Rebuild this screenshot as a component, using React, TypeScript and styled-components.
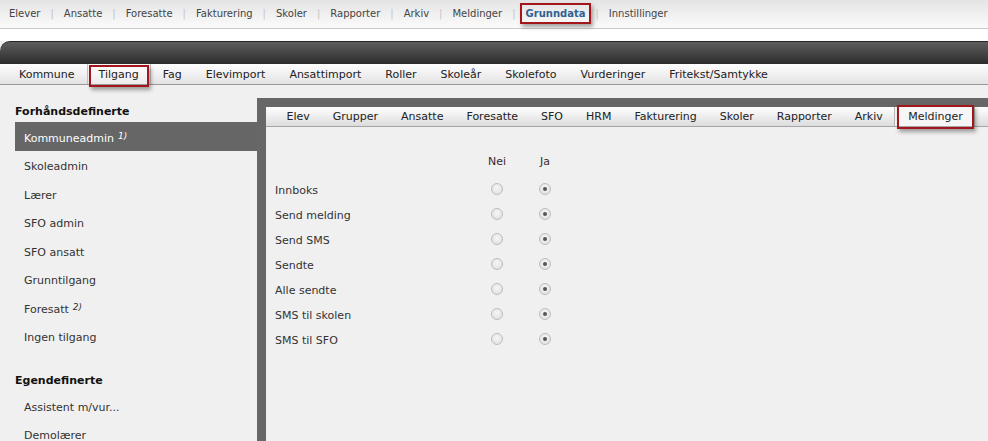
import styled, { createGlobalStyle } from 'styled-components';

const GlobalStyle = createGlobalStyle`
    html, body {
        margin: 0;
        padding: 0;
        background: #f0f0f0;
        overflow: hidden;
    }
    body {
        font-family: "DejaVu Sans", Verdana, sans-serif;
        font-size: 11px;
        color: #333;
    }
`;

const topItems = ['Elever', 'Ansatte', 'Foresatte', 'Fakturering', 'Skoler', 'Rapporter', 'Arkiv', 'Meldinger', 'Grunndata', 'Innstillinger'];
const subItems = ['Kommune', 'Tilgang', 'Fag', 'Elevimport', 'Ansattimport', 'Roller', 'Skoleår', 'Skolefoto', 'Vurderinger', 'Fritekst/Samtykke'];
const tabs = ['Elev', 'Grupper', 'Ansatte', 'Foresatte', 'SFO', 'HRM', 'Fakturering', 'Skoler', 'Rapporter', 'Arkiv', 'Meldinger'];
const predefined = [
    { name: 'Kommuneadmin', note: '1)' },
    { name: 'Skoleadmin' },
    { name: 'Lærer' },
    { name: 'SFO admin' },
    { name: 'SFO ansatt' },
    { name: 'Grunntilgang' },
    { name: 'Foresatt', note: '2)' },
    { name: 'Ingen tilgang' },
];
const custom = ['Assistent m/vur...', 'Demolærer'];
const rights = ['Innboks', 'Send melding', 'Send SMS', 'Sendte', 'Alle sendte', 'SMS til skolen', 'SMS til SFO'];

const Page = styled.div`
    display: flex;
    flex-direction: column;
    height: 441px;
`;

const TopNav = styled.nav`
    display: flex;
    align-items: center;
    height: 28px;
    padding-left: 9px;
    background: linear-gradient(#e4e4e4, #fbfbfb);
    border-bottom: 1px solid #c9c9c9;
    font-size: 10px;
    color: #444;
`;

const TopLink = styled.span<{ active?: boolean }>`
    position: relative;
    line-height: 14px;
    ${props => props.active && `
        font-weight: bold;
        color: #2f628f;
        &::after {
            content: '';
            position: absolute;
            top: -5px;
            bottom: -5px;
            left: -6px;
            right: -6px;
            border: 2px solid #a3161b;
            box-shadow: 2px 3px 4px rgba(0, 0, 0, 0.35);
        }
    `}
`;

const Sep = styled.span`
    color: #c4c4c4;
    margin: 0 10px;
`;

const Spacer = styled.div`
    height: 12px;
    background: #fff;
`;

const DarkBar = styled.div`
    height: 22px;
    border-top: 1px solid #262626;
    border-top-left-radius: 10px;
    background: linear-gradient(#5e5e5e, #2c2c2c);
`;

const SubNav = styled.nav`
    display: flex;
    align-items: stretch;
    height: 20px;
    padding-left: 7px;
    background: linear-gradient(#fefefe, #e3e3e3);
    border-bottom: 1px solid #9a9a9a;
`;

const SubItem = styled.span<{ marked?: boolean }>`
    position: relative;
    display: flex;
    align-items: center;
    padding: 0 12px;
    color: #222;
    ${props => props.marked && `
        border-left: 1px solid #c2c2c2;
        border-right: 1px solid #c2c2c2;
        padding: 0 11px;
        background: linear-gradient(#ffffff, #ececec);
        &::after {
            content: '';
            position: absolute;
            top: 1px;
            bottom: -3px;
            left: 1px;
            right: 1px;
            border: 2px solid #a3161b;
            box-shadow: 2px 3px 4px rgba(0, 0, 0, 0.35);
        }
    `}
`;

const Body = styled.div`
    flex: 1;
    display: flex;
    min-height: 0;
`;

const Sidebar = styled.aside`
    width: 242px;
    flex-shrink: 0;
    padding: 20px 0 0 15px;
`;

const Heading = styled.div<{ gap?: number }>`
    font-weight: bold;
    color: #111;
    line-height: 14px;
    margin: ${props => props.gap || 0}px 0 3px;
`;

const RoleItem = styled.div<{ selected?: boolean }>`
    box-sizing: border-box;
    height: 28.5px;
    display: flex;
    align-items: center;
    padding: 4px 0 0 9px;
    color: ${props => (props.selected ? '#fff' : '#333')};
    background: ${props => (props.selected ? '#666' : 'transparent')};
`;

const Note = styled.sup`
    font-style: italic;
    font-size: 9px;
    margin-left: 4px;
    position: relative;
    top: -2px;
    vertical-align: baseline;
`;

const Panel = styled.section`
    flex: 1;
    margin-top: 13px;
    border-top: 9px solid #676767;
    border-left: 9px solid #676767;
    display: flex;
    flex-direction: column;
    min-width: 0;
`;

const TabBar = styled.div`
    display: flex;
    align-items: stretch;
    height: 19px;
    padding-left: 9px;
    background: linear-gradient(#ffffff, #dcdcdc);
    border-bottom: 1px solid #a5a5a5;
    white-space: nowrap;
`;

const Tab = styled.span<{ marked?: boolean }>`
    position: relative;
    display: flex;
    align-items: center;
    padding: 0 11.5px;
    color: #222;
    ${props => props.marked && `
        border-left: 1px solid #b8b8b8;
        border-right: 1px solid #b8b8b8;
        padding: 0 11px 0 13px;
        background: #f6f6f6;
        &::after {
            content: '';
            position: absolute;
            top: -2px;
            bottom: -3px;
            left: 2px;
            right: 0px;
            border: 2px solid #a3161b;
            box-shadow: 2px 3px 4px rgba(0, 0, 0, 0.35);
        }
    `}
`;

const Content = styled.div`
    flex: 1;
    background: #f0f0f0;
    padding: 22px 0 0 9px;
`;

const Grid = styled.div`
    display: grid;
    grid-template-columns: 198px 48px 48px;
    grid-template-rows: 29px;
    grid-auto-rows: 25px;
    align-items: center;
`;

const ColHead = styled.div`
    text-align: center;
    color: #3a2a2a;
    align-self: start;
    line-height: 25px;
`;

const Label = styled.div`
    color: #333;
`;

const Cell = styled.div`
    display: flex;
    justify-content: center;
    margin-top: -3px;
`;

const Radio = styled.input`
    appearance: none;
    margin: 0;
    width: 12px;
    height: 12px;
    border-radius: 50%;
    border: 1px solid #bdbdbd;
    background: radial-gradient(circle at 50% 40%, #f6f6f6, #dcdcdc);
    position: relative;
    &:checked::after {
        content: '';
        position: absolute;
        left: 3px;
        top: 3px;
        width: 4px;
        height: 4px;
        border-radius: 50%;
        background: #555;
    }
`;

const App = () => {
    return (
        <Page>
            <GlobalStyle />
            <TopNav>
                {topItems.map((item, index) => (
                    <span key={item}>
                        {index > 0 && <Sep>|</Sep>}
                        <TopLink active={item === 'Grunndata'}>{item}</TopLink>
                    </span>
                ))}
            </TopNav>
            <Spacer />
            <DarkBar />
            <SubNav>
                {subItems.map(item => (
                    <SubItem key={item} marked={item === 'Tilgang'}>{item}</SubItem>
                ))}
            </SubNav>
            <Body>
                <Sidebar>
                    <Heading>Forhåndsdefinerte</Heading>
                    {predefined.map((role, index) => (
                        <RoleItem key={role.name} selected={index === 0}>
                            {role.name}
                            {role.note && <Note>{role.note}</Note>}
                        </RoleItem>
                    ))}
                    <Heading gap={24}>Egendefinerte</Heading>
                    {custom.map(name => (
                        <RoleItem key={name}>{name}</RoleItem>
                    ))}
                </Sidebar>
                <Panel>
                    <TabBar>
                        {tabs.map(tab => (
                            <Tab key={tab} marked={tab === 'Meldinger'}>{tab}</Tab>
                        ))}
                    </TabBar>
                    <Content>
                        <Grid>
                            <div />
                            <ColHead>Nei</ColHead>
                            <ColHead>Ja</ColHead>
                            {rights.map(right => (
                                <>
                                    <Label key={right}>{right}</Label>
                                    <Cell><Radio type="radio" name={right} readOnly /></Cell>
                                    <Cell><Radio type="radio" name={right} checked readOnly /></Cell>
                                </>
                            ))}
                        </Grid>
                    </Content>
                </Panel>
            </Body>
        </Page>
    );
};

export default App;
